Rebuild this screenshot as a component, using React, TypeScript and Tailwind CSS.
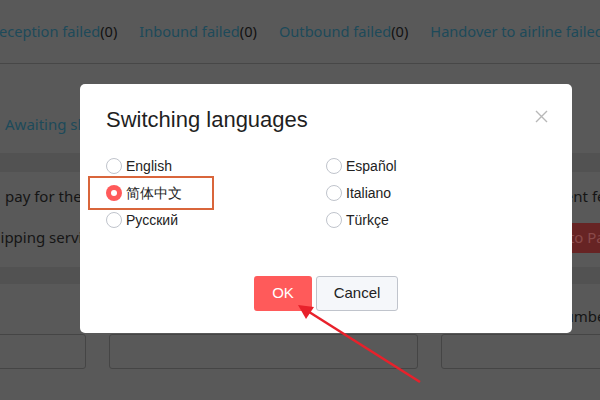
import { useState } from "react";

const tabs = [
    { label: "Reception failed", count: 0 },
    { label: "Inbound failed", count: 0 },
    { label: "Outbound failed", count: 0 },
    { label: "Handover to airline failed", count: 0 },
]

const languages = [
    { value: "en", label: "English" },
    { value: "es", label: "Español" },
    { value: "zh", label: "简体中文" },
    { value: "it", label: "Italiano" },
    { value: "ru", label: "Русский" },
    { value: "tr", label: "Türkçe" },
]

const Radio = ({ checked }: { checked: boolean }) => {
    if (checked) {
        return (
            <span className="flex w-[16px] h-[16px] items-center justify-center rounded-full bg-[#ff5a5a]">
                <span className="w-[6px] h-[6px] rounded-full bg-white" />
            </span>
        )
    }
    return <span className="w-[16px] h-[16px] rounded-full border border-[#c0c4cc] bg-white" />
}

const App = () => {
    const [lang, setLang] = useState<string>("zh")

    return (
        <div className="relative w-[600px] h-[400px] overflow-hidden bg-[#595959] font-['Noto_Sans',sans-serif]">
            {/* page behind the mask */}
            <div className="flex h-[63px] items-center gap-x-[22px] ml-[-10px] text-[14.6px] whitespace-nowrap">
                {tabs.map((t) => (
                    <span key={t.label} className="shrink-0 text-[#1d4a5a]">
                        {t.label}<span className="text-[#111]">({t.count})</span>
                    </span>
                ))}
            </div>
            <div className="h-px bg-[#474747]" />
            <div className="flex h-[89px] items-center px-[5px] pt-[32px] text-[15px] text-[#1d4a5a] whitespace-nowrap">
                Awaiting shipment
            </div>
            <div className="h-[19px] bg-[#525252]" />
            <div className="flex h-[48px] items-center justify-between pl-[5px] text-[15px] text-[#151515] whitespace-nowrap">
                <span>pay for the shipping</span>
                <span className="shrink-0 mr-[-14px]">Payment fee</span>
            </div>
            <div className="flex h-[35px] items-center justify-between text-[15px] text-[#151515] whitespace-nowrap">
                <span className="ml-[-17px]">Shipping service</span>
                <span className="flex shrink-0 h-[30px] w-[110px] mr-[-55px] items-center bg-[#672424] text-[#8a4a4a]">Go to Pay</span>
            </div>
            <div className="h-[12px]" />
            <div className="h-[17px] bg-[#525252]" />
            <div className="flex h-[50px] items-center pt-[14px] pl-[553px] text-[15px] text-[#151515] whitespace-nowrap">
                <span className="shrink-0">Number</span>
            </div>
            <div className="flex gap-x-[23px] ml-[-20px]">
                <div className="shrink-0 w-[106px] h-[35px] rounded-[3px] border border-[#454545]" />
                <div className="shrink-0 w-[309px] h-[35px] rounded-[3px] border border-[#454545]" />
                <div className="shrink-0 w-[200px] h-[35px] rounded-[3px] border border-[#454545]" />
            </div>

            {/* dialog */}
            <div className="absolute left-[80px] top-[84px] w-[492px] h-[249px] rounded-[5px] bg-white font-['Liberation_Sans',Arial,sans-serif]">
                <div className="flex items-start justify-between pl-[26px] pr-[24px] pt-[22px]">
                    <h2 className="text-[22px] leading-[28px] text-[#1f1f1f]">Switching languages</h2>
                    <svg width="13" height="13" viewBox="0 0 13 13" className="mt-[4px]">
                        <path d="M1 1 L12 12 M12 1 L1 12" stroke="#b8b8b8" strokeWidth="1.4" />
                    </svg>
                </div>
                <div className="grid grid-cols-[220px_1fr] gap-y-[9px] pl-[26px] pt-[23px]">
                    {languages.map((l) => (
                        <label
                            key={l.value}
                            onClick={() => setLang(l.value)}
                            className="relative flex h-[18px] items-center gap-x-[4px] text-[14px] text-[#222] cursor-pointer"
                        >
                            <Radio checked={lang === l.value} />
                            <span>{l.label}</span>
                            {l.value === "zh" && (
                                <span className="absolute left-[-18px] top-[-8px] w-[126px] h-[34px] border-2 border-[#d9653b]" />
                            )}
                        </label>
                    ))}
                </div>
                <div className="flex justify-center gap-x-[4px] pt-[47px]">
                    <button className="w-[58px] h-[35px] rounded-[3px] bg-[#ff5a5a] text-[15px] text-white">OK</button>
                    <button className="w-[82px] h-[35px] rounded-[3px] border border-[#c0c4cc] bg-[#f5f7fa] text-[15px] text-[#222]">Cancel</button>
                </div>
            </div>

            {/* annotation arrow */}
            <svg className="absolute left-0 top-0" width="600" height="400">
                <line x1="420" y1="382" x2="306" y2="310" stroke="#e8212b" strokeWidth="2.5" />
                <polygon points="298,305 314,307 306,319" fill="#e8212b" />
            </svg>
        </div>
    )
}

export default App
